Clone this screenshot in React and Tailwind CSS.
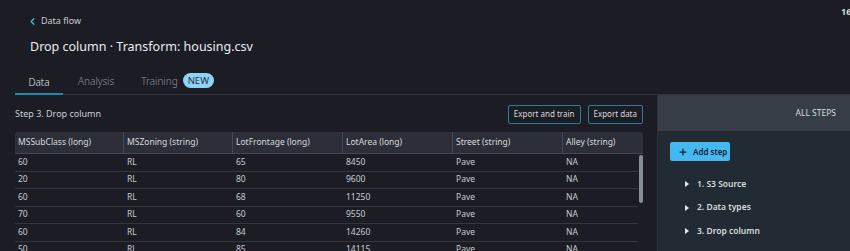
import { ChevronLeft, Plus } from "lucide-react";

const columns = [
  { label: "MSSubClass (long)", w: "w-[109px]" },
  { label: "MSZoning (string)", w: "w-[109px]" },
  { label: "LotFrontage (long)", w: "w-[110px]" },
  { label: "LotArea (long)", w: "w-[110px]" },
  { label: "Street (string)", w: "w-[110px]" },
  { label: "Alley (string)", w: "flex-1" },
];

const rows = [
  ["60", "RL", "65", "8450", "Pave", "NA"],
  ["20", "RL", "80", "9600", "Pave", "NA"],
  ["60", "RL", "68", "11250", "Pave", "NA"],
  ["70", "RL", "60", "9550", "Pave", "NA"],
  ["60", "RL", "84", "14260", "Pave", "NA"],
  ["50", "RL", "85", "14115", "Pave", "NA"],
];

const steps = ["1. S3 Source", "2. Data types", "3. Drop column"];

const App = () => {
  return (
    <div className="relative flex flex-col w-[850px] h-[251px] overflow-hidden bg-[#1b1c24] text-[#d5dbdb] font-['Noto_Sans',sans-serif]">
      <span className="absolute top-[5px] left-[841px] text-[9px] font-bold text-[#d5dbdb]">16</span>

      <div className="flex flex-col pl-[15px] h-[95px] shrink-0">
        <div className="flex items-center gap-[3px] pl-[12px] pt-[14px] h-[28px]">
          <ChevronLeft size={11} strokeWidth={3} className="text-[#44b9d6]" />
          <span className="text-[9px] text-[#c6ccd2]">Data flow</span>
        </div>
        <h1 className="pl-[15px] mt-[10px] text-[12.5px] text-[#eaeded] leading-[18px]">
          Drop column · Transform: housing.csv
        </h1>
        <div className="flex items-end mt-[14px] h-[25px] border-b border-[#30333b]">
          <div className="flex justify-center w-[48px] h-full pt-[4px] border-b-2 border-[#1d88a8] -mb-px text-[10px] font-light text-[#e6e9ea]">
            Data
          </div>
          <div className="pl-[15px] h-full pt-[4px] text-[10px] font-light text-[#8d949c]">Analysis</div>
          <div className="flex items-start gap-[5px] pl-[27px] h-full pt-[4px] text-[10px] font-light text-[#8d949c]">
            Training
            <span className="px-[5px] mt-[-1px] rounded-full bg-[#8fd4f7] text-[#233342] text-[9.5px] font-normal leading-[15px]">NEW</span>
          </div>
        </div>
      </div>

      <div className="flex flex-1 min-h-0">
        <div className="flex flex-col flex-1 pl-[15px] pr-[14px]">
          <div className="flex items-center justify-between h-[37px] shrink-0 pt-[1px]">
            <span className="text-[9px] text-[#c9cfd4]">Step 3. Drop column</span>
            <div className="flex gap-[7px]">
              <button className="h-[19px] px-[5px] border border-[#2b7d99] rounded-[2px] text-[8px] text-[#d5dbdb]">
                Export and train
              </button>
              <button className="h-[19px] px-[5px] border border-[#2b7d99] rounded-[2px] text-[8px] text-[#d5dbdb]">
                Export data
              </button>
            </div>
          </div>
          <div className="relative flex flex-col shrink-0 rounded-t-[3px] overflow-hidden">
            <div className="flex h-[22px] shrink-0 bg-[#2c2f38] border-b border-[#43474f]">
              {columns.map((c, i) => (
                <div
                  key={c.label}
                  className={`${c.w} flex items-center pl-[3px] text-[8.5px] text-[#d5dbdb] ${i < columns.length - 1 ? "border-r border-[#454952]" : ""}`}
                >
                  {c.label}
                </div>
              ))}
            </div>
            <div className="flex flex-col pr-[5px]">
              {rows.map((r, ri) => (
                <div key={ri} className="flex h-[17.5px] shrink-0 border-b border-[#33363d] bg-[#1c1d24]">
                  {r.map((v, ci) => (
                    <div key={ci} className={`${columns[ci].w} flex items-center pl-[3px] text-[8.5px] text-[#c6ccd2]`}>
                      {v}
                    </div>
                  ))}
                </div>
              ))}
            </div>
            <div className="absolute right-0 top-[23px] w-[4px] h-[48px] rounded-full bg-[#848c94]" />
          </div>
        </div>

        <div className="flex flex-col w-[193px] bg-[#222a34] border-l border-[#2a323d]">
          <div className="flex items-center justify-end h-[36px] pr-[14px] bg-[#363d47] text-[8.5px] text-[#d5dbdb]">
            ALL STEPS
          </div>
          <div className="flex flex-col pl-[12px] pt-[11px]">
            <button className="flex items-center gap-[5px] w-[60px] h-[19px] pl-[8px] rounded-[2px] bg-[#44b9f0] text-[#10202c] text-[8px] font-semibold">
              <Plus size={10} strokeWidth={3} />
              Add step
            </button>
            <div className="flex flex-col gap-[9.5px] mt-[16px] pl-[15px]">
              {steps.map((s) => (
                <div key={s} className="flex items-center gap-[8px] h-[14px] text-[8.5px] font-semibold text-[#d5dbdb]">
                  <svg width="4" height="6" viewBox="0 0 4 6">
                    <path d="M0 0 L4 3 L0 6 Z" fill="#e6e9ea" />
                  </svg>
                  {s}
                </div>
              ))}
            </div>
          </div>
        </div>
      </div>
    </div>
  );
};

export default App;
